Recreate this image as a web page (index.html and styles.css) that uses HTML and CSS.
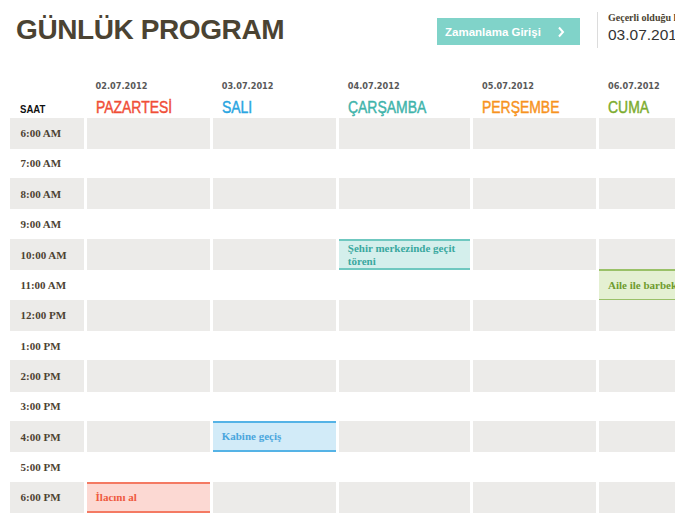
FILE: index.html
```html
<!DOCTYPE html>
<html lang="tr">
<head>
<meta charset="utf-8">
<title>Günlük Program</title>
<link rel="stylesheet" href="styles.css">
</head>
<body>
<header class="top">
  <h1 class="title">GÜNLÜK PROGRAM</h1>
  <button class="entry" type="button">
    <span>Zamanlama Girişi</span>
    <svg class="chev" width="8" height="12" viewBox="0 0 8 12"><polyline points="2,1.5 6,6 2,10.5" fill="none" stroke="#fff" stroke-width="2"/></svg>
  </button>
  <div class="valid">
    <div class="valid-label">Geçerli olduğu hafta</div>
    <div class="valid-date">03.07.2012</div>
  </div>
</header>

<main class="schedule">
  <div class="row head">
    <div class="saat"><span class="narrow">SAAT</span></div>
    <div class="day"><div class="date">02.07.2012</div><div class="dname mon"><span class="narrow">PAZARTESİ</span></div></div>
    <div class="day"><div class="date">03.07.2012</div><div class="dname tue"><span class="narrow">SALI</span></div></div>
    <div class="day"><div class="date">04.07.2012</div><div class="dname wed"><span class="narrow">ÇARŞAMBA</span></div></div>
    <div class="day"><div class="date">05.07.2012</div><div class="dname thu"><span class="narrow">PERŞEMBE</span></div></div>
    <div class="day"><div class="date">06.07.2012</div><div class="dname fri"><span class="narrow">CUMA</span></div></div>
  </div>

  <div class="row shade"><div class="time">6:00 AM</div><div></div><div></div><div></div><div></div><div></div></div>
  <div class="row plain"><div class="time">7:00 AM</div><div></div><div></div><div></div><div></div><div></div></div>
  <div class="row shade"><div class="time">8:00 AM</div><div></div><div></div><div></div><div></div><div></div></div>
  <div class="row plain"><div class="time">9:00 AM</div><div></div><div></div><div></div><div></div><div></div></div>
  <div class="row shade"><div class="time">10:00 AM</div><div></div><div></div><div class="ev ev-teal">Şehir merkezinde geçit töreni</div><div></div><div></div></div>
  <div class="row plain"><div class="time">11:00 AM</div><div></div><div></div><div></div><div></div><div class="ev ev-green">Aile ile barbekü</div></div>
  <div class="row shade"><div class="time">12:00 PM</div><div></div><div></div><div></div><div></div><div></div></div>
  <div class="row plain"><div class="time">1:00 PM</div><div></div><div></div><div></div><div></div><div></div></div>
  <div class="row shade"><div class="time">2:00 PM</div><div></div><div></div><div></div><div></div><div></div></div>
  <div class="row plain"><div class="time">3:00 PM</div><div></div><div></div><div></div><div></div><div></div></div>
  <div class="row shade"><div class="time">4:00 PM</div><div></div><div class="ev ev-blue">Kabine geçiş</div><div></div><div></div><div></div></div>
  <div class="row plain"><div class="time">5:00 PM</div><div></div><div></div><div></div><div></div><div></div></div>
  <div class="row shade"><div class="time">6:00 PM</div><div class="ev ev-red">İlacını al</div><div></div><div></div><div></div><div></div></div>
</main>
</body>
</html>
```

FILE: styles.css
```css
html, body {
  margin: 0;
  padding: 0;
  overflow: hidden;
  background: #ffffff;
}

body {
  font-family: "Liberation Sans", Arial, sans-serif;
  color: #333;
}

.top {
  display: flex;
  align-items: flex-start;
  height: 60px;
  padding-left: 16px;
  box-sizing: border-box;
  white-space: nowrap;
}

.title {
  flex: 0 0 421px;
  margin: 0;
  padding-top: 13.5px;
  font-size: 28px;
  line-height: 32px;
  font-weight: bold;
  letter-spacing: -0.4px;
  color: #4b4332;
}

.entry {
  flex: 0 0 143px;
  height: 27px;
  margin-top: 18px;
  padding: 0 15px 0 8px;
  border: 0;
  background: #80d3c9;
  color: #fff;
  display: flex;
  align-items: center;
  justify-content: space-between;
  font-family: "Liberation Sans", Arial, sans-serif;
  font-size: 11.5px;
  font-weight: bold;
  box-sizing: border-box;
}

.chev { display: block; }

.valid {
  flex: 0 0 auto;
  margin-top: 12px;
  margin-left: 17px;
  height: 36px;
  padding-left: 10px;
  border-left: 1px solid #dcdcdc;
}

.valid-label {
  font-family: "Liberation Serif", serif;
  font-weight: bold;
  font-size: 10px;
  line-height: 12px;
  color: #4b4332;
}

.valid-date {
  margin-top: 2px;
  font-size: 15.5px;
  line-height: 18px;
  color: #333;
}

.schedule {
  padding-left: 10px;
}

.row {
  display: grid;
  grid-template-columns: 74px 123.5px 123.5px 131.7px 123.3px 123.5px;
  column-gap: 2.6px;
}

.row.head { height: 57.5px; }
.row.shade { height: 31.3px; }
.row.plain { height: 29.4px; }

.row.shade > div { background: #ecebe9; }

.saat {
  display: flex;
  align-items: flex-end;
  padding: 0 0 3px 10px;
  font-size: 11.7px;
  line-height: 12px;
  font-weight: bold;
  color: #111;
}

.narrow {
  display: inline-block;
  transform: scaleX(0.82);
  transform-origin: left center;
}

.day {
  display: flex;
  flex-direction: column;
  justify-content: flex-end;
  padding: 0 0 2px 9px;
}

.date {
  font-family: "DejaVu Sans", Verdana, sans-serif;
  font-weight: bold;
  font-size: 8.2px;
  line-height: 10px;
  color: #595959;
  margin-bottom: 8px;
}

.dname {
  font-size: 17px;
  line-height: 17px;
  white-space: nowrap;
  -webkit-text-stroke: 0.45px currentColor;
}

.mon { color: #f04e37; }
.tue { color: #2aa5e1; }
.wed { color: #3fb4ab; }
.thu { color: #f7931e; }
.fri { color: #7cac2e; }

.time {
  display: flex;
  align-items: center;
  padding-left: 10.5px;
  font-family: "Liberation Serif", serif;
  font-weight: bold;
  font-size: 11px;
  color: #4d4232;
}

.ev {
  display: flex;
  align-items: center;
  padding: 0 6px 0 9px;
  box-sizing: border-box;
  border-top: 2px solid;
  border-bottom: 2px solid;
  font-family: "Liberation Serif", serif;
  font-weight: bold;
  font-size: 11px;
  line-height: 12.5px;
  white-space: normal;
}

.row.plain > .ev { margin: -1px 0; }

.row > .ev.ev-teal { background: #d4efec; border-color: #6fc8c0; color: #3aa89f; }
.row > .ev.ev-green { background: #e4f0d2; border-color: #9ac168; color: #6f9b2e; white-space: nowrap; }
.row > .ev.ev-blue { background: #d2ebf8; border-color: #55b3e6; color: #4aa6dd; }
.row > .ev.ev-red { background: #fcd9d3; border-color: #f47a63; color: #ef5a40; }
```
